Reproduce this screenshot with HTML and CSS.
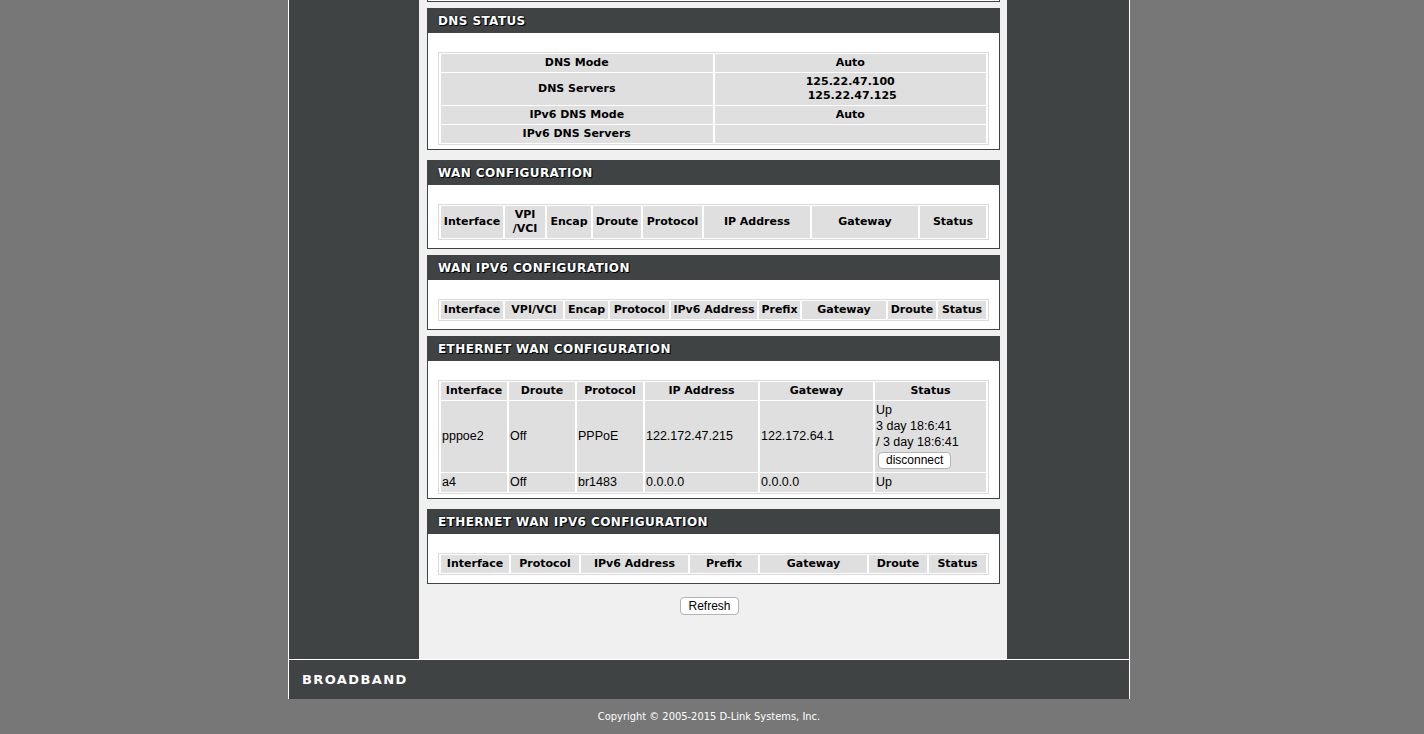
FILE: index.html
```html
<!DOCTYPE html>
<html>
<head>
<meta charset="utf-8">
<title>Device Info - WAN</title>
<link rel="stylesheet" href="styles.css">
</head>
<body>
<div class="page">
  <div class="frame">
    <div class="side-left"></div>
    <div class="content">
      <div class="box-tail"></div>

      <div class="box box-dns">
        <h2 class="box-title">DNS STATUS</h2>
        <div class="box-body">
          <table class="grid">
            <colgroup><col class="half"><col class="half"></colgroup>
            <tr><th>DNS Mode</th><th>Auto</th></tr>
            <tr><th>DNS Servers</th><th>125.22.47.100<br>&nbsp;125.22.47.125</th></tr>
            <tr><th>IPv6 DNS Mode</th><th>Auto</th></tr>
            <tr><th>IPv6 DNS Servers</th><th></th></tr>
          </table>
        </div>
      </div>

      <div class="box">
        <h2 class="box-title">WAN CONFIGURATION</h2>
        <div class="box-body">
          <table class="grid">
            <colgroup>
              <col class="w62"><col class="w40"><col class="w44"><col class="w48">
              <col class="w59"><col class="w106"><col class="w106"><col class="w66">
            </colgroup>
            <tr>
              <th>Interface</th><th>VPI<br>/VCI</th><th>Encap</th><th>Droute</th>
              <th>Protocol</th><th>IP Address</th><th>Gateway</th><th>Status</th>
            </tr>
          </table>
        </div>
      </div>

      <div class="box">
        <h2 class="box-title">WAN IPV6 CONFIGURATION</h2>
        <div class="box-body">
          <table class="grid">
            <colgroup>
              <col class="w62"><col class="w58"><col class="w43"><col class="w59">
              <col class="w86"><col class="w41"><col class="w84"><col class="w48"><col class="w48">
            </colgroup>
            <tr>
              <th>Interface</th><th>VPI/VCI</th><th>Encap</th><th>Protocol</th>
              <th>IPv6 Address</th><th>Prefix</th><th>Gateway</th><th>Droute</th><th>Status</th>
            </tr>
          </table>
        </div>
      </div>

      <div class="box box-eth">
        <h2 class="box-title">ETHERNET WAN CONFIGURATION</h2>
        <div class="box-body">
          <table class="grid">
            <colgroup>
              <col class="w66"><col class="w66"><col class="w66">
              <col class="w113"><col class="w113"><col class="w111">
            </colgroup>
            <tr>
              <th>Interface</th><th>Droute</th><th>Protocol</th>
              <th>IP Address</th><th>Gateway</th><th>Status</th>
            </tr>
            <tr>
              <td>pppoe2</td><td>Off</td><td>PPPoE</td>
              <td>122.172.47.215</td><td>122.172.64.1</td>
              <td>Up<br>3 day 18:6:41<br>/ 3 day 18:6:41<br><button class="btn btn-small" type="button">disconnect</button></td>
            </tr>
            <tr>
              <td>a4</td><td>Off</td><td>br1483</td>
              <td>0.0.0.0</td><td>0.0.0.0</td><td>Up</td>
            </tr>
          </table>
        </div>
      </div>

      <div class="box">
        <h2 class="box-title">ETHERNET WAN IPV6 CONFIGURATION</h2>
        <div class="box-body">
          <table class="grid">
            <colgroup>
              <col class="w68"><col class="w68"><col class="w107"><col class="w68">
              <col class="w107"><col class="w58"><col class="w57">
            </colgroup>
            <tr>
              <th>Interface</th><th>Protocol</th><th>IPv6 Address</th><th>Prefix</th>
              <th>Gateway</th><th>Droute</th><th>Status</th>
            </tr>
          </table>
        </div>
      </div>

      <div class="actions">
        <button class="btn" type="button">Refresh</button>
      </div>
    </div>
    <div class="side-right"></div>
  </div>
  <div class="footer">
    <span class="brand">BROADBAND</span>
  </div>
  <div class="copyright">Copyright &copy; 2005-2015 D-Link Systems, Inc.</div>
</div>
</body>
</html>
```

FILE: styles.css
```css
* {
  box-sizing: border-box;
}

html, body {
  margin: 0;
  padding: 0;
}

body {
  background: #777777;
  font-family: "Liberation Sans", Arial, sans-serif;
  color: #000;
}

.page {
  width: 842px;
  margin-left: 288px;
}

.frame {
  display: flex;
  border-left: 1px solid #ffffff;
  border-right: 1px solid #ffffff;
}

.side-left {
  width: 130px;
  background: #404344;
}

.side-right {
  width: 122px;
  background: #404344;
}

.content {
  width: 588px;
  background: #f0f0f0;
  padding: 0 7px 44px 8px;
}

.box-tail {
  height: 2px;
  background: #ffffff;
  border: 1px solid #404344;
  border-top: 0;
  margin-bottom: 6px;
}

.box {
  background: #ffffff;
  border: 1px solid #404344;
  margin-bottom: 6px;
}

.box-title {
  margin: 0;
  height: 24px;
  line-height: 24px;
  padding-left: 10px;
  background: #404344;
  color: #ffffff;
  font-family: "DejaVu Sans", Verdana, sans-serif;
  font-size: 12px;
  font-weight: bold;
  letter-spacing: 0.4px;
  text-shadow: 0 0 2px #000, 1px 1px 0 #000;
}

.box-body {
  padding: 19px 10px 8px;
}

.box-dns {
  margin-bottom: 10px;
}

.box-dns .box-body {
  padding-bottom: 4px;
}

.box-eth {
  margin-bottom: 10px;
}

.box-eth .box-body {
  padding-bottom: 4px;
}

.grid {
  width: 100%;
  table-layout: fixed;
  border-collapse: separate;
  border-spacing: 2px 1px;
  border: 1px solid #dadada;
}

.grid th,
.grid td {
  background: #dfdfdf;
  border: 0;
}

.grid th {
  font-family: "DejaVu Sans", Verdana, sans-serif;
  font-size: 11px;
  font-weight: bold;
  line-height: 14px;
  padding: 2px 2px;
  text-align: center;
  vertical-align: middle;
}

.grid td {
  font-family: "Liberation Sans", Arial, sans-serif;
  font-size: 12.5px;
  line-height: 16px;
  padding: 1px 2px 2px 1px;
  text-align: left;
  vertical-align: middle;
  white-space: nowrap;
}

.half { width: 50%; }
.w40 { width: 40px; }
.w41 { width: 41px; }
.w43 { width: 43px; }
.w44 { width: 44px; }
.w48 { width: 48px; }
.w57 { width: 57px; }
.w58 { width: 58px; }
.w59 { width: 59px; }
.w62 { width: 62px; }
.w66 { width: 66px; }
.w68 { width: 68px; }
.w84 { width: 84px; }
.w86 { width: 86px; }
.w106 { width: 106px; }
.w107 { width: 107px; }
.w111 { width: 111px; }
.w113 { width: 113px; }

.btn {
  display: inline-block;
  height: 18px;
  padding: 0 7px;
  margin: 0;
  background: #ffffff;
  border: 1px solid #b4b4b4;
  border-radius: 4px;
  font-family: "Liberation Sans", Arial, sans-serif;
  font-size: 12px;
  line-height: 16px;
  color: #000;
  vertical-align: top;
}

.btn-small {
  height: 17px;
  line-height: 15px;
  margin: 2px 0 1px 2px;
}

.actions {
  padding: 7px 8px 0 0;
  text-align: center;
  height: 25px;
}

.footer {
  height: 40px;
  background: #404344;
  border-top: 1px solid #ffffff;
  border-left: 1px solid #ffffff;
  border-right: 1px solid #ffffff;
  display: flex;
  align-items: center;
  padding-left: 13px;
}

.brand {
  color: #ffffff;
  font-family: "DejaVu Sans", Verdana, sans-serif;
  font-weight: bold;
  font-size: 13px;
  letter-spacing: 1.4px;
}

.copyright {
  height: 35px;
  line-height: 35px;
  text-align: center;
  color: #ffffff;
  font-family: "DejaVu Sans Condensed", "DejaVu Sans", sans-serif;
  font-stretch: condensed;
  font-size: 11px;
}
```
